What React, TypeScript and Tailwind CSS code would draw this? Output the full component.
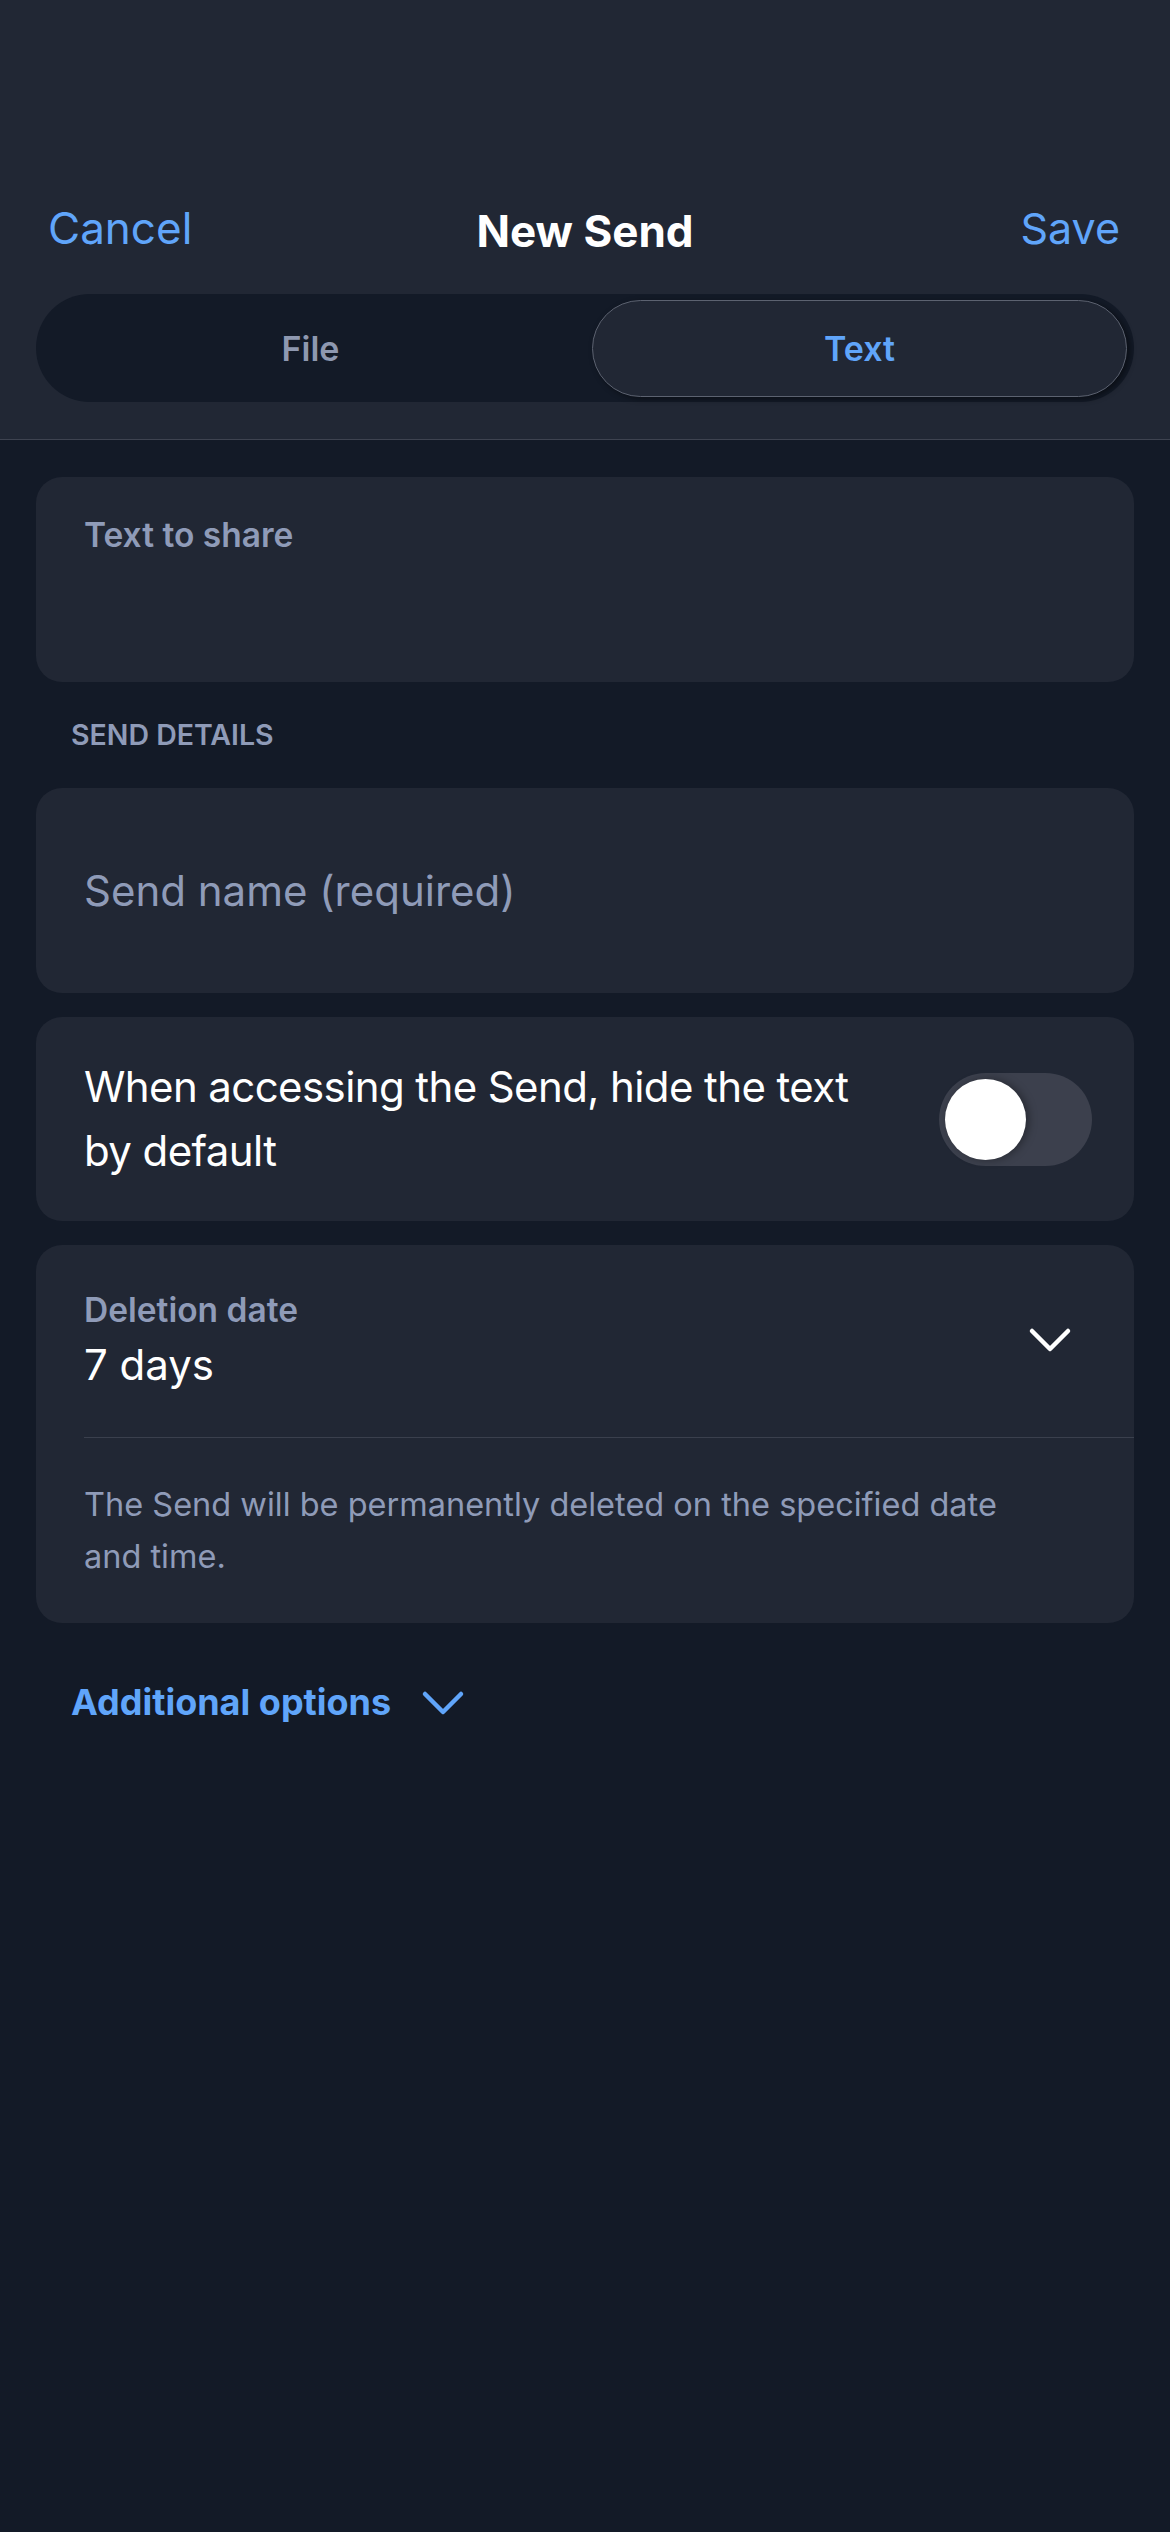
import React from "react";

function Chevron({ color, className }: { color: string; className?: string }) {
  return (
    <svg width="44" height="28" viewBox="0 0 44 28" className={className} fill="none">
      <path d="M4 5 L22 23 L40 5" stroke={color} strokeWidth="4.5" strokeLinecap="round" strokeLinejoin="round" />
    </svg>
  );
}

export default function App() {
  return (
    <div
      className="min-h-[2532px] w-[1170px] bg-[#131a27] text-white"
      style={{ fontFamily: "Inter, 'Noto Sans', sans-serif" }}
    >
      {/* Header */}
      <div className="bg-[#212734] border-b border-[#3e4350] pt-[178px] pb-[37px]">
        <div className="grid grid-cols-[1fr_auto_1fr] items-center h-[100px] px-[48px]">
          <div className="text-[44px] leading-[44px] text-[#60a5fa] justify-self-start">Cancel</div>
          <div className="text-[44px] leading-[44px] font-bold text-white mt-[6px]">New Send</div>
          <div className="text-[43px] leading-[44px] text-[#60a5fa] justify-self-end mr-[2px]">Save</div>
        </div>
        <div className="mx-[36px] mt-[16px] h-[108px] rounded-full bg-[#131a27] grid grid-cols-2">
          <div className="flex items-center justify-center text-[34px] font-semibold text-[#8e98b0]">
            File
          </div>
          <div className="pt-[6px] pb-[5px] px-[7px]">
            <div className="h-full rounded-full bg-[#212734] border-[1.5px] border-[#5c6270] shadow-[3px_2px_6px_rgba(0,0,0,0.45)] flex items-center justify-center text-[34px] font-semibold text-[#60a5fa]">
              Text
            </div>
          </div>
        </div>
      </div>

      {/* Body */}
      <div className="px-[36px] pt-[37px]">
        <div className="h-[205px] rounded-[26px] bg-[#212734] px-[48px] pt-[38px]">
          <div className="text-[33.5px] leading-[40px] font-semibold text-[#8f9bb8]">Text to share</div>
        </div>

        <div className="mt-[36px] pl-[35px] text-[28.5px] leading-[34px] font-semibold text-[#8f9bb8] uppercase">
          Send details
        </div>

        <div className="mt-[36px] h-[205px] rounded-[26px] bg-[#212734] px-[48px] flex items-center">
          <div className="text-[42px] leading-[50px] text-[#8f9bb8]">Send name (required)</div>
        </div>

        <div className="mt-[24px] h-[204px] rounded-[26px] bg-[#212734] pl-[48px] pr-[42px] flex items-center">
          <div className="flex-1 pr-[50px] text-[42px] leading-[64px] text-white tracking-[-0.6px]">
            When accessing the Send, hide the text by default
          </div>
          <div className="w-[153px] h-[93px] rounded-full bg-[#3c404d] flex items-center pl-[6px] shrink-0">
            <div className="w-[81px] h-[81px] rounded-full bg-white shadow-[3px_0_8px_rgba(0,0,0,0.35)]" />
          </div>
        </div>

        <div className="mt-[24px] rounded-[26px] bg-[#212734]">
          <div className="flex items-center pl-[48px] pr-[62px] pt-[45px] pb-[47px]">
            <div className="flex-1">
              <div className="text-[33.5px] leading-[40px] font-semibold text-[#8f9bb8]">Deletion date</div>
              <div className="mt-[10px] text-[42px] leading-[50px] text-white">7 days</div>
            </div>
            <Chevron color="#ffffff" />
          </div>
          <div className="ml-[48px] h-px bg-[#3a404d]" />
          <div className="pl-[48px] pr-[110px] pt-[41px] pb-[40px] text-[32.5px] leading-[52px] text-[#8f9bb8]">
            The Send will be permanently deleted on the specified date and time.
          </div>
        </div>

        <div className="mt-[57px] pl-[35px] flex items-center">
          <div className="text-[36px] leading-[44px] font-bold text-[#60a5fa]">Additional options</div>
          <Chevron color="#60a5fa" className="ml-[30px] mt-[2px]" />
        </div>
      </div>
    </div>
  );
}
